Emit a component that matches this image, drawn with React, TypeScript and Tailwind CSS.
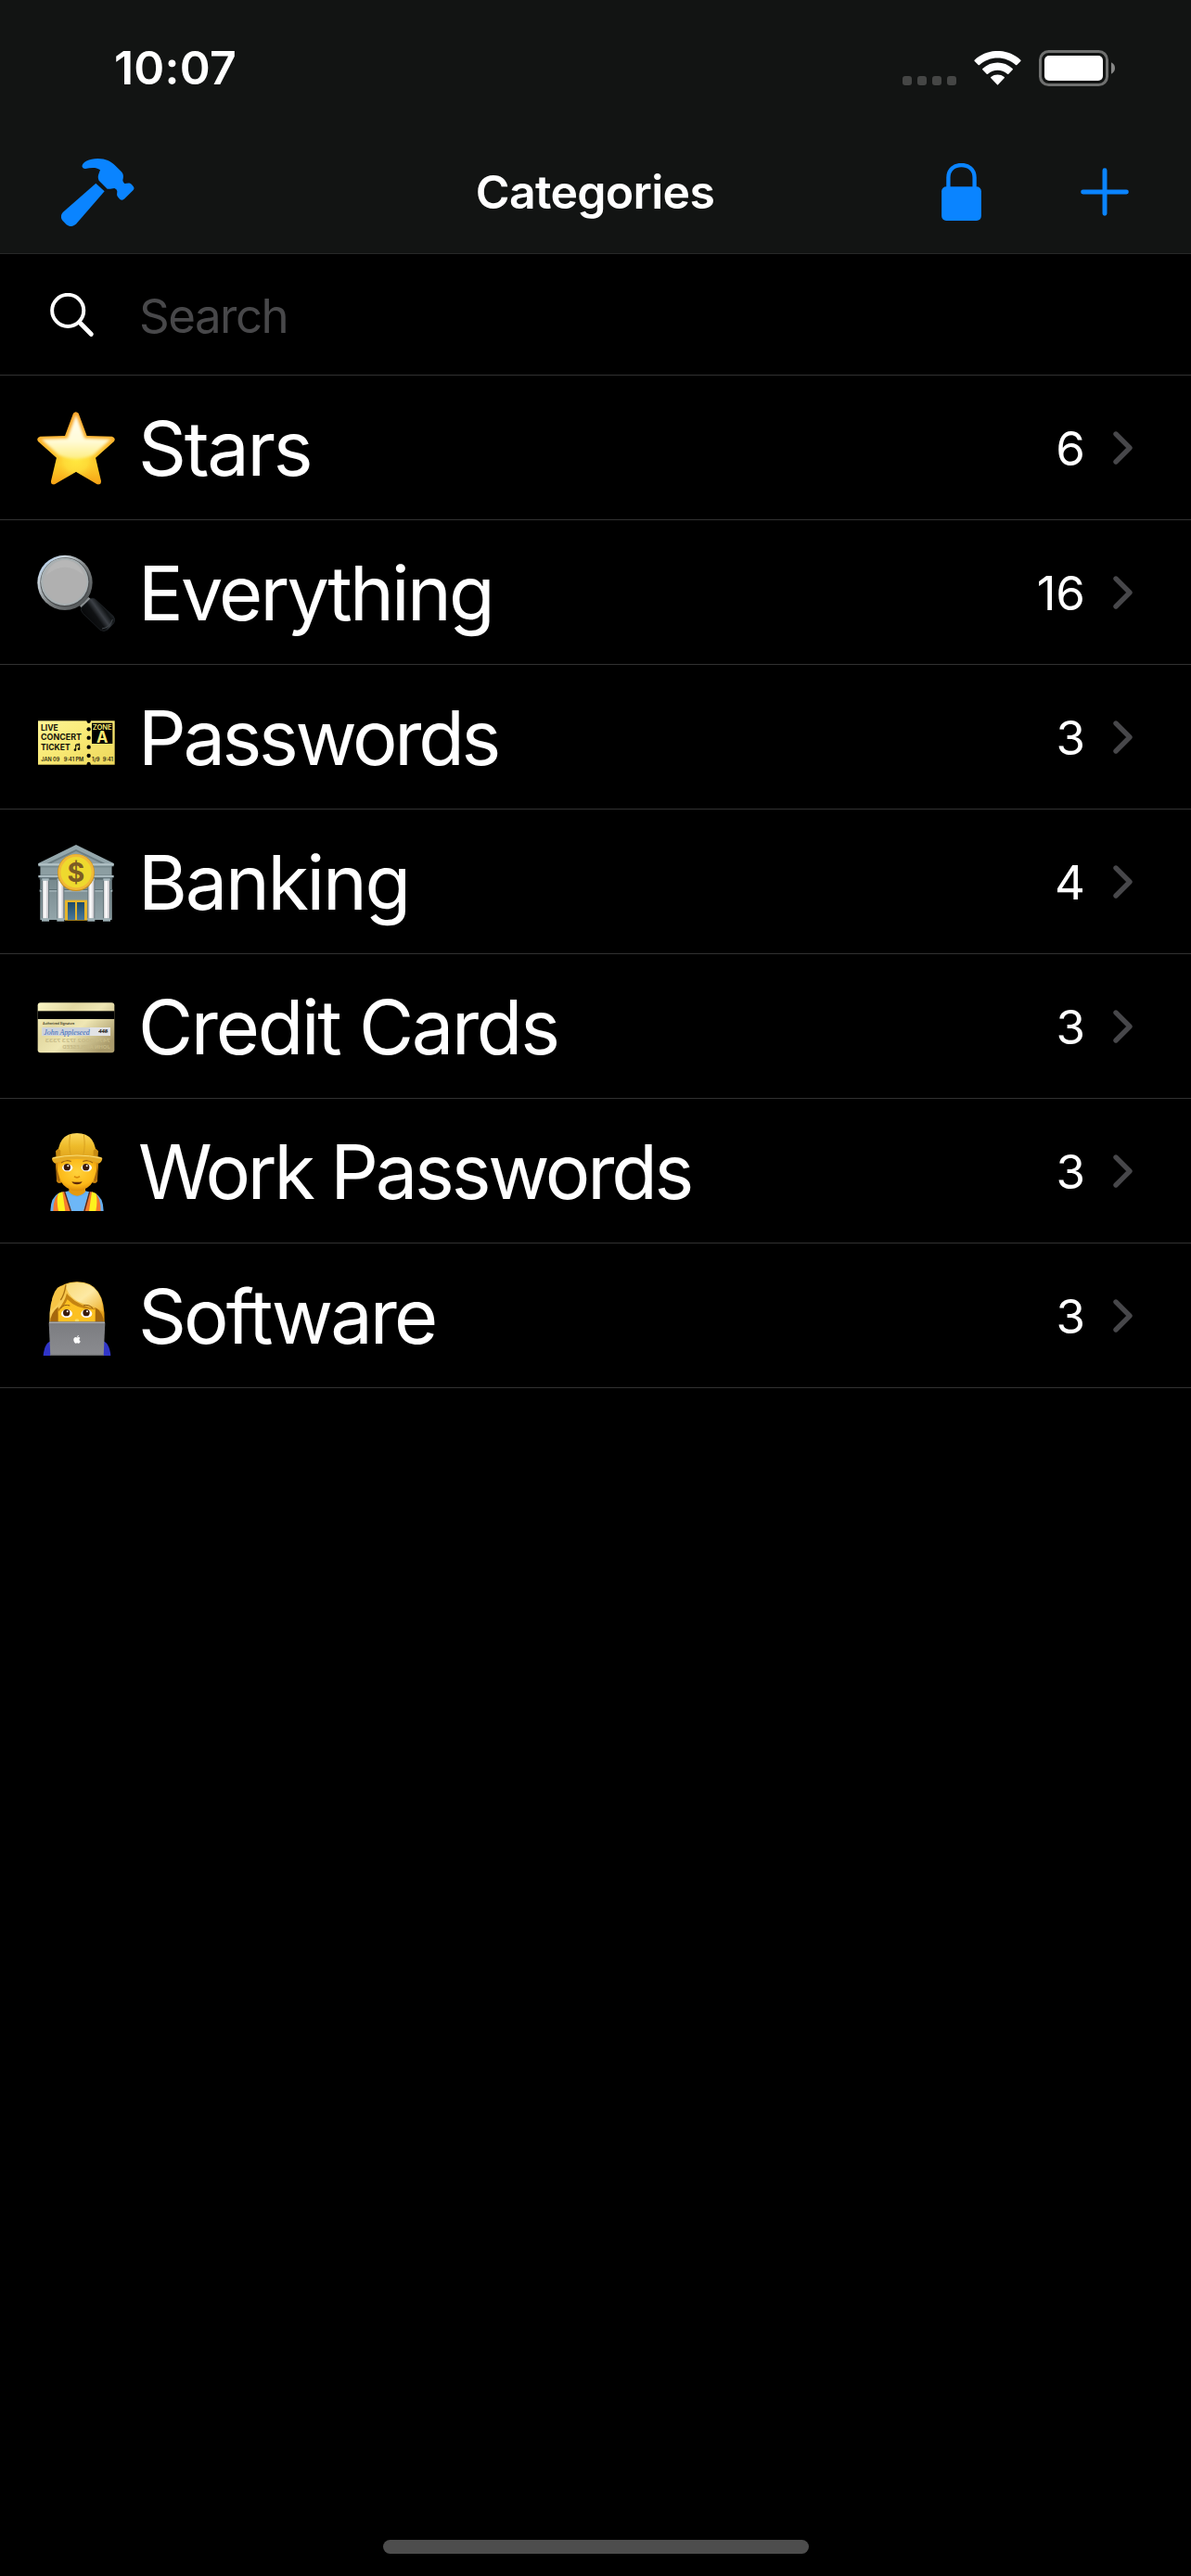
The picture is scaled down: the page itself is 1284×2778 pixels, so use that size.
import React from 'react';
import { FaApple } from 'react-icons/fa';

const StarIcon = () => (
  <svg viewBox="30 66 252 252" className="w-[84px] h-[84px]">
    <defs>
      <linearGradient id="starBase" x1="0" y1="0" x2="0" y2="1">
        <stop offset="0" stopColor="#f9a227" />
        <stop offset="0.4" stopColor="#fcb32c" />
        <stop offset="0.7" stopColor="#fdd32b" />
        <stop offset="1" stopColor="#f59a12" />
      </linearGradient>
      <linearGradient id="starGloss" x1="0" y1="0" x2="0" y2="1">
        <stop offset="0" stopColor="#fffdf0" />
        <stop offset="0.6" stopColor="#fffbd8" />
        <stop offset="1" stopColor="#fdee83" />
      </linearGradient>
      <radialGradient id="starGlow" cx="156" cy="225" r="80" gradientUnits="userSpaceOnUse">
        <stop offset="0" stopColor="#ffe940" />
        <stop offset="0.5" stopColor="#fedc38" stopOpacity="0.9" />
        <stop offset="1" stopColor="#fbb01e" stopOpacity="0" />
      </radialGradient>
      <clipPath id="starClip">
        <path d="M147 77Q155 68 164 77L191 150L272 152Q286 156 279 168L219 221L237 296Q237 310 224 307L156 266L87 307Q74 310 75 296L93 221L33 168Q26 156 40 152L120 150Z" />
      </clipPath>
      <filter id="starSoft"><feGaussianBlur stdDeviation="4" /></filter>
    </defs>
    <g clipPath="url(#starClip)">
      <rect x="30" y="66" width="252" height="252" fill="url(#starBase)" />
      <rect x="30" y="150" width="252" height="168" fill="url(#starGlow)" />
      <path d="M156 82L184 158L268 161L212 212Q156 236 100 212L44 161L128 158Z" fill="url(#starGloss)" filter="url(#starSoft)" />
    </g>
  </svg>
);

const MagnifierIcon = () => (
  <svg viewBox="30 534 252 252" className="w-[84px] h-[84px]">
    <defs>
      <linearGradient id="rim" x1="0" y1="0" x2="1" y2="1">
        <stop offset="0" stopColor="#9cc4f0" />
        <stop offset="0.25" stopColor="#c9d3da" />
        <stop offset="0.55" stopColor="#7b7f80" />
        <stop offset="0.85" stopColor="#55595b" />
        <stop offset="1" stopColor="#a9adb0" />
      </linearGradient>
      <linearGradient id="handle" x1="190" y1="750" x2="260" y2="700" gradientUnits="userSpaceOnUse">
        <stop offset="0" stopColor="#060708" />
        <stop offset="0.4" stopColor="#0f1113" />
        <stop offset="0.6" stopColor="#3c4046" />
        <stop offset="0.8" stopColor="#121517" />
        <stop offset="1" stopColor="#22262b" />
      </linearGradient>
    </defs>
    <path d="M168 700L196 672Q204 676 207 684L180 708Q172 708 168 700Z" fill="#8d9294" />
    <circle cx="120" cy="625" r="89" fill="url(#rim)" />
    <circle cx="120" cy="624" r="80" fill="#4b4e50" />
    <circle cx="119" cy="622" r="77" fill="#a9b1b3" />
    <circle cx="120" cy="622" r="71" fill="#b0b0b0" />
    <path d="M60 600Q75 555 120 552Q165 555 180 600Q150 575 120 575Q90 575 60 600Z" fill="#b7b7b7" />
    <path d="M174 704L203 677Q210 673 218 679L276 733Q286 744 278 756L258 777Q246 786 234 778L178 724Q168 714 174 704Z" fill="url(#handle)" stroke="#24282d" strokeWidth="2" />
    <path d="M240 774Q266 770 274 744" fill="none" stroke="#43484d" strokeWidth="3" />
  </svg>
);

const TicketIcon = () => (
  <svg viewBox="30 42 252 252" className="w-[84px] h-[84px]" fontFamily="Inter, sans-serif">
    <defs>
      <linearGradient id="ticket" x1="0" y1="0" x2="1" y2="1">
        <stop offset="0" stopColor="#fdf495" />
        <stop offset="0.5" stopColor="#f8e873" />
        <stop offset="1" stopColor="#ecd65a" />
      </linearGradient>
    </defs>
    <rect x="33" y="112" width="248" height="142" fill="url(#ticket)" />
    <g fill="#000">
      <path d="M190 111H204Q203 120 197 120Q191 120 190 111Z" />
      <circle cx="197" cy="139" r="6.5" />
      <circle cx="197" cy="167" r="6.5" />
      <circle cx="197" cy="197" r="6.5" />
      <circle cx="197" cy="225" r="6.5" />
      <path d="M190 255H204Q203 245 197 245Q191 245 190 255Z" />
      <rect x="207" y="119" width="67" height="67" />
    </g>
    <g fill="#15140a" fontWeight="700" fontSize="27">
      <text x="42" y="143" textLength="56" lengthAdjust="spacingAndGlyphs">LIVE</text>
      <text x="42" y="175" textLength="132" lengthAdjust="spacingAndGlyphs">CONCERT</text>
      <text x="42" y="208" textLength="95" lengthAdjust="spacingAndGlyphs">TICKET</text>
    </g>
    <g fill="none" stroke="#15140a" strokeWidth="3">
      <path d="M155 205V189L167 186V202M155 193L167 190" />
    </g>
    <circle cx="153" cy="206" r="4" fill="#15140a" />
    <circle cx="165" cy="203" r="4" fill="#15140a" />
    <g fill="#2b280f" fontWeight="600" fontSize="17">
      <text x="43" y="242" textLength="60" lengthAdjust="spacingAndGlyphs">JAN 09</text>
      <text x="116" y="242" textLength="65" lengthAdjust="spacingAndGlyphs">9:41 PM</text>
      <text x="207" y="242" textLength="25" lengthAdjust="spacingAndGlyphs">1/9</text>
      <text x="242" y="242" textLength="34" lengthAdjust="spacingAndGlyphs">9:41</text>
    </g>
    <text x="209" y="140" fill="#f8e873" fontWeight="600" fontSize="23" textLength="63" lengthAdjust="spacingAndGlyphs">ZONE</text>
    <text x="241" y="183" fill="#f8e873" fontWeight="700" fontSize="50" textAnchor="middle">A</text>
  </svg>
);

const BankIcon = () => (
  <svg viewBox="30 510 252 252" className="w-[84px] h-[84px]">
    <defs>
      <linearGradient id="wall" x1="0" y1="0" x2="0" y2="1">
        <stop offset="0" stopColor="#6d7f84" />
        <stop offset="1" stopColor="#93a5aa" />
      </linearGradient>
      <linearGradient id="pillar" x1="0" y1="0" x2="1" y2="0">
        <stop offset="0" stopColor="#cfcfd2" />
        <stop offset="0.4" stopColor="#ffffff" />
        <stop offset="1" stopColor="#c2c0c6" />
      </linearGradient>
      <linearGradient id="door" x1="0" y1="0" x2="0" y2="1">
        <stop offset="0" stopColor="#1d4a68" />
        <stop offset="1" stopColor="#47789a" />
      </linearGradient>
    </defs>
    <rect x="40" y="580" width="232" height="176" fill="url(#wall)" />
    <path d="M156 513L278 573V583H34V573Z" fill="#94a7ac" />
    <path d="M156 528L250 573H62Z" fill="#6c7e83" />
    <path d="M156 534L236 573H76Z" fill="#8b9da2" />
    <rect x="34" y="574" width="244" height="5" fill="#b3c3c7" />
    <rect x="42" y="586" width="228" height="24" fill="#8c9ea2" />
    <rect x="34" y="612" width="244" height="7" fill="#a9babf" />
    <rect x="38" y="619" width="236" height="7" fill="#5a6b70" />
    <rect x="38" y="657" width="236" height="3" fill="#5d6f74" />
    <rect x="38" y="660" width="236" height="5" fill="#a0b1b6" />
    <rect x="120" y="692" width="72" height="66" fill="#e6b52b" />
    <rect x="129" y="699" width="24" height="57" fill="url(#door)" />
    <rect x="159" y="699" width="24" height="57" fill="url(#door)" />
    {[57, 106, 205, 255].map(x => (
      <g key={x}>
        <rect x={x - 12} y="626" width="24" height="128" fill="#66777c" />
        <rect x={x - 9} y="628" width="18" height="124" fill="url(#pillar)" />
        <rect x={x - 11} y="622" width="22" height="7" fill="#a9babf" />
        <rect x={x - 12} y="751" width="24" height="10" fill="#9db0b5" />
      </g>
    ))}
    <circle cx="156" cy="603" r="60" fill="#c98f1c" />
    <circle cx="156" cy="602" r="58" fill="#f0b838" />
    <circle cx="156" cy="602" r="50" fill="#eed92e" />
    <text x="156" y="633" fill="#7c5c25" fontFamily="Inter, sans-serif" fontWeight="700" fontSize="86" textAnchor="middle">$</text>
  </svg>
);

const CardIcon = () => (
  <svg viewBox="30 48 252 252" className="w-[84px] h-[84px]">
    <defs>
      <linearGradient id="card" x1="0" y1="0" x2="1" y2="0.7">
        <stop offset="0" stopColor="#fbf6c4" />
        <stop offset="0.35" stopColor="#e3d9a2" />
        <stop offset="0.6" stopColor="#efe7b4" />
        <stop offset="1" stopColor="#ab9c6c" />
      </linearGradient>
    </defs>
    <rect x="32" y="94" width="248" height="162" rx="9" fill="url(#card)" />
    <rect x="32" y="121" width="248" height="26" fill="#000" />
    <text x="48" y="166" fill="#4c472c" fontFamily="Inter, sans-serif" fontWeight="600" fontSize="11" textLength="103" lengthAdjust="spacingAndGlyphs">Authorized Signature</text>
    <rect x="46" y="174" width="221" height="27" fill="#e2e3e6" />
    <rect x="46" y="174" width="155" height="27" fill="#cdd3dc" />
    {/* Embossed digits seen from the back */}
    <g fill="#c6b986" fontFamily="Inter, sans-serif" fontWeight="700" fontSize="15">
      <text transform="translate(266 222) scale(-1 1)" textLength="210" lengthAdjust="spacingAndGlyphs">7474 0002 1723 7333</text>
      <text transform="translate(266 244) scale(-1 1)" textLength="154" lengthAdjust="spacingAndGlyphs">JOHN APPLESEED</text>
    </g>
    <text x="52" y="197" fill="#3b69b8" fontFamily="Liberation Serif, serif" fontStyle="italic" fontSize="27" textLength="148" lengthAdjust="spacingAndGlyphs">John Appleseed</text>
    <text x="229" y="193" fill="#222" fontFamily="Inter, sans-serif" fontStyle="italic" fontWeight="700" fontSize="15" textLength="29">448</text>
    <path d="M228 188H259" stroke="#222" strokeWidth="2" />
  </svg>
);

const WorkerIcon = () => (
  <svg viewBox="30 516 252 252" className="w-[84px] h-[84px]">
    <defs>
      <linearGradient id="helmet" x1="0" y1="0" x2="0" y2="1">
        <stop offset="0" stopColor="#fbd75c" />
        <stop offset="0.5" stopColor="#eebb2a" />
        <stop offset="1" stopColor="#dfa11c" />
      </linearGradient>
      <radialGradient id="workerFace" cx="0.5" cy="0.4" r="0.6">
        <stop offset="0" stopColor="#ffd23c" />
        <stop offset="0.7" stopColor="#fcb918" />
        <stop offset="1" stopColor="#dd8d0a" />
      </radialGradient>
    </defs>
    <path d="M73 768Q74 722 100 710L133 703H186L217 710Q244 722 245 768Z" fill="#65aef0" />
    <path d="M133 690H186V706Q160 732 133 706Z" fill="#e69a0e" />
    <path d="M126 708Q160 736 192 708L198 706L184 768H138L120 706Z" fill="#6db7f7" />
    <path d="M82 768Q82 722 104 708L120 705L141 768Z" fill="#f47a2e" />
    <path d="M236 768Q236 722 215 708L199 705L180 768Z" fill="#f47a2e" />
    <path d="M98 712L112 706L121 768H99Q92 738 98 712Z" fill="#fdf21d" />
    <path d="M221 712L207 706L198 768H220Q226 738 221 712Z" fill="#fdf21d" />
    <path d="M119 705L139 768M200 705L183 768" stroke="#4b2a26" strokeWidth="4" />
    <path d="M91 605L93 672Q98 682 110 676L112 610ZM227 605L225 672Q220 682 208 676L206 610Z" fill="#c98310" />
    <path d="M90 600Q88 640 104 668Q124 702 159 703Q194 702 214 668Q230 640 228 600Z" fill="url(#workerFace)" />
    <path d="M91 606L93 664Q97 676 105 668Q92 636 94 606ZM227 606L225 664Q221 676 213 668Q226 636 224 606Z" fill="#a8690c" />
    <path d="M108 612Q124 600 140 608M178 608Q194 600 210 612" fill="none" stroke="#a36a12" strokeWidth="4" />
    <ellipse cx="128" cy="628" rx="17" ry="12" fill="#fff" />
    <ellipse cx="190" cy="628" rx="17" ry="12" fill="#fff" />
    <circle cx="127" cy="626" r="11" fill="#3a1b0b" />
    <circle cx="188" cy="626" r="11" fill="#3a1b0b" />
    <circle cx="130" cy="622" r="3" fill="#fff" />
    <circle cx="191" cy="622" r="3" fill="#fff" />
    <path d="M150 656Q159 663 168 656" fill="none" stroke="#d98a0a" strokeWidth="5" />
    <path d="M142 673Q159 676 176 673Q172 682 159 682Q146 682 142 673Z" fill="#5e2a08" />
    <path d="M97 600Q94 516 159 516Q224 516 221 600Z" fill="url(#helmet)" />
    <path d="M137 520Q131 560 139 588M181 520Q187 560 179 588" fill="none" stroke="#d9a11f" strokeWidth="3" />
    <path d="M98 566L90 574L92 600H106V572ZM220 566L228 574L226 600H212V572Z" fill="#c88c12" />
    <path d="M78 598Q82 588 159 586Q236 588 241 598Q240 610 230 614Q196 600 159 600Q122 600 88 614Q78 608 78 598Z" fill="#e5ab25" />
    <path d="M80 597Q120 588 159 588Q200 588 239 597" fill="none" stroke="#fbe17a" strokeWidth="3" />
  </svg>
);

const LaptopWomanIcon = () => (
  <svg viewBox="30 534 252 252" className="w-[84px] h-[84px]">
    <defs>
      <linearGradient id="hair" x1="0" y1="0" x2="0.7" y2="1">
        <stop offset="0" stopColor="#f3b62c" />
        <stop offset="0.5" stopColor="#f8cf5c" />
        <stop offset="1" stopColor="#e09a14" />
      </linearGradient>
      <linearGradient id="fringe" x1="0" y1="0" x2="1" y2="1">
        <stop offset="0" stopColor="#f9d976" />
        <stop offset="0.5" stopColor="#fde9a4" />
        <stop offset="1" stopColor="#eeb02a" />
      </linearGradient>
      <linearGradient id="lid" x1="0" y1="0" x2="0" y2="1">
        <stop offset="0" stopColor="#7b7c80" />
        <stop offset="1" stopColor="#8b8c90" />
      </linearGradient>
    </defs>
    <path d="M50 786Q54 742 78 738H240Q264 742 268 786Z" fill="#3035c8" />
    <path d="M70 680Q66 546 159 547Q252 546 248 680Z" fill="url(#hair)" />
    <path d="M72 680Q72 650 98 628L100 680ZM246 680Q246 650 218 628L216 680Z" fill="#a5670c" />
    <path d="M98 680V640Q112 618 128 590Q160 628 218 634V680Z" fill="#fcc022" />
    <path d="M98 636Q118 616 126 584L132 592Q168 628 226 636Q160 640 128 604Q118 626 98 644Z" fill="#c58412" />
    <path d="M122 558Q118 604 76 640Q74 590 96 566Q108 556 122 558Z" fill="#f6c446" />
    <path d="M122 557Q130 600 180 618Q220 628 243 644Q240 552 159 549Q138 549 122 557Z" fill="url(#fringe)" />
    <path d="M123 557Q118 590 106 606" fill="none" stroke="#a87010" strokeWidth="4" />
    <path d="M106 632Q118 618 136 624M180 624Q196 618 210 632" fill="none" stroke="#8f5b10" strokeWidth="3" />
    <ellipse cx="126" cy="650" rx="18" ry="13" fill="#fff" />
    <ellipse cx="190" cy="650" rx="18" ry="13" fill="#fff" />
    <circle cx="125" cy="647" r="11" fill="#3a1b0b" />
    <circle cx="189" cy="647" r="11" fill="#3a1b0b" />
    <circle cx="128" cy="643" r="3" fill="#fff" />
    <circle cx="192" cy="643" r="3" fill="#fff" />
    <ellipse cx="159" cy="672" rx="7" ry="5" fill="#ffd95c" />
    <path d="M68 680Q68 676 73 676H245Q250 676 250 680L245 786H73Z" fill="url(#lid)" />
    <path d="M69 679H249" stroke="#b4b5b8" strokeWidth="3" />
    <path d="M73 784H245" stroke="#5e5f62" strokeWidth="3" />
    <FaApple x={144} y={718} size={30} color="#fff" />
  </svg>
);

const HammerIcon = () => (
  <svg viewBox="198 513 237 219" className="w-[79px] h-[73px]" fill="#0a84ff">
    <path d="M310 593L338 619L247 724Q231 739 215 727L202 713Q192 700 204 686Z" />
    <path d="M266 540C262 528 286 513 316 513C343 513 358 522 371 534L393 556C401 565 399 573 397 583Q397 590 403 594C411 594 418 589 426 597L431 603Q436 609 431 615L403 643Q396 650 388 645L382 638C376 631 379 626 379 619Q378 611 370 609C362 609 356 613 347 611L320 584C314 572 319 564 324 550C310 540 294 543 276 546Q268 546 266 540Z" />
  </svg>
);

const LockIcon = () => (
  <svg viewBox="225 467 129 187" className="w-[43px] h-[62px]">
    <path d="M247 548V514C247 486 267 473 289.500 473C312 473 332 486 332 514V548" fill="none" stroke="#0a84ff" strokeWidth="13" />
    <rect x="225" y="543" width="129" height="111" rx="15" fill="#0a84ff" />
  </svg>
);

const PlusIcon = () => (
  <svg viewBox="0 0 157 157" className="w-[52px] h-[52px]" stroke="#0a84ff" strokeWidth="15" strokeLinecap="round">
    <path d="M8 78.500H149M78.500 8V149" />
  </svg>
);

const WifiIcon = () => (
  <svg viewBox="330 102 153 111" className="w-[51px] h-[37px]" fill="#fff">
    <path d="M332 131C374 92 439 92 481 131Q483 133 481 135L469 147Q467 149 465 147C432 117 381 117 348 147Q346 149 344 147L332 135Q330 133 332 131Z" />
    <path d="M358 159C386 133 427 133 455 159Q457 161 455 163L442 176Q440 178 438 176C420 160 393 160 375 176Q373 178 371 176L358 163Q356 161 358 159Z" />
    <path d="M385 186C397 176 416 176 428 186Q430 188 428 190L408 211Q406.500 213 405 211L385 190Q383 188 385 186Z" />
  </svg>
);

const BatteryIcon = () => (
  <svg viewBox="540 99 246 117" className="w-[82px] h-[39px]">
    <rect x="544.500" y="103.500" width="216" height="108" rx="27" fill="none" stroke="#6f706f" strokeWidth="9" />
    <rect x="558" y="117" width="189" height="81" rx="15" fill="#fff" />
    <path d="M774 139Q786 145 786 157.500Q786 170 774 176Z" fill="#868786" />
  </svg>
);

const categories = [
  { name: 'Stars', count: 6, icon: <StarIcon />, tracking: 'tracking-[-2.3px]' },
  { name: 'Everything', count: 16, icon: <MagnifierIcon />, tracking: 'tracking-[-2.8px]' },
  { name: 'Passwords', count: 3, icon: <TicketIcon />, tracking: 'tracking-[-3.3px]' },
  { name: 'Banking', count: 4, icon: <BankIcon />, tracking: 'tracking-[-2.3px]' },
  { name: 'Credit Cards', count: 3, icon: <CardIcon />, tracking: 'tracking-[-2.3px]' },
  { name: 'Work Passwords', count: 3, icon: <WorkerIcon />, tracking: 'tracking-[-3.2px]' },
  { name: 'Software', count: 3, icon: <LaptopWomanIcon />, tracking: 'tracking-[-2.9px]' },
];

const App: React.FC = () => {
  return (
    <div className="w-[1284px] h-[2778px] bg-black text-white flex flex-col overflow-hidden font-['Inter',sans-serif]">
      <header className="h-[274px] shrink-0 bg-[#121413] border-b border-[#272828]">
        {/* Status bar */}
        <div className="h-[146px] pl-[123px] pr-[82px] flex items-center justify-between">
          <span className="text-[50px] leading-none font-semibold tracking-[0.2px]">10:07</span>
          <div className="h-[39px] flex items-end gap-[19px]">
            <div className="flex gap-1.5 mb-px">
              {[0, 1, 2, 3].map(i => (
                <span key={i} className="w-2.5 h-2.5 rounded-[3px] bg-[#454645]" />
              ))}
            </div>
            <div className="mb-px"><WifiIcon /></div>
            <BatteryIcon />
          </div>
        </div>

        {/* Navigation bar */}
        <div className="h-[122px] pl-[66px] pr-[67px] grid grid-cols-[1fr_auto_1fr] items-center">
          <button className="justify-self-start"><HammerIcon /></button>
          <h1 className="text-[50px] leading-none font-semibold tracking-[-0.7px]">Categories</h1>
          <div className="justify-self-end flex items-center gap-[107px]">
            <button><LockIcon /></button>
            <button><PlusIcon /></button>
          </div>
        </div>
      </header>

      <div className="h-[131px] shrink-0 pl-[54px] flex items-center border-b border-[#313131]">
        <svg viewBox="162 947 141 142" className="w-[47px] h-[47px]" fill="none" stroke="#fff">
          <circle cx="219.500" cy="1004" r="51.500" strokeWidth="12" />
          <path d="M257 1042L295 1081" strokeWidth="15" strokeLinecap="round" />
        </svg>
        <span className="ml-[49px] pt-0.5 text-[51px] leading-none tracking-[-1.5px] text-[#48484a]">Search</span>
      </div>

      <ul>
        {categories.map(c => (
          <li key={c.name} className="h-[156px] pl-10 pr-[63px] flex items-center border-b border-[#313131]">
            <div className="shrink-0 mt-[3px]">{c.icon}</div>
            <span className={`ml-[25px] pt-1 text-[81px] leading-none whitespace-nowrap ${c.tracking}`}>{c.name}</span>
            <span className="ml-auto pt-0.5 text-[51px] leading-none">{c.count}</span>
            <svg viewBox="0 0 63 108" className="ml-[30px] w-[21px] h-9" fill="none" stroke="#47474a" strokeWidth="16" strokeLinecap="round" strokeLinejoin="round">
              <path d="M9 9L54 54L9 99" />
            </svg>
          </li>
        ))}
      </ul>

      {/* Home indicator */}
      <div className="mt-auto mb-6 mx-auto w-[459px] h-[15px] shrink-0 rounded-full bg-[#4d4d4d]" />
    </div>
  );
};

export default App;
